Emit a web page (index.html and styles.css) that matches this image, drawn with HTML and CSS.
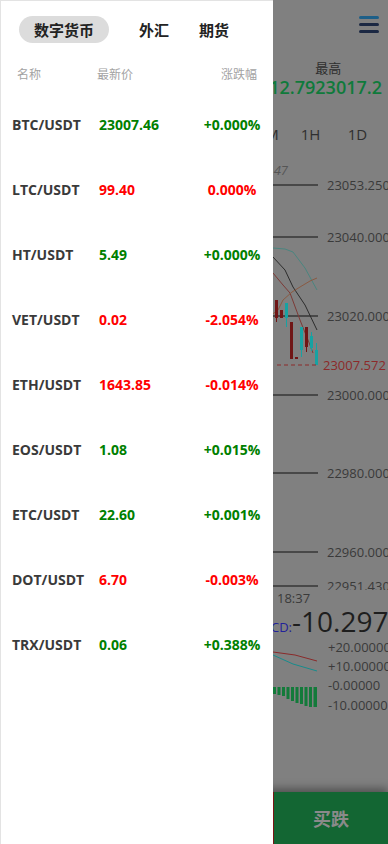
FILE: index.html
```html
<!DOCTYPE html>
<html lang="zh-CN">
<head>
<meta charset="utf-8">
<title>行情</title>
<link rel="stylesheet" href="styles.css">
</head>
<body>
<div class="page">
  <div class="topbar">
    <div class="menu"><span class="bar bar-top"></span><span class="bar"></span><span class="bar"></span></div>
  </div>
  <div class="stats">
    <div class="stat"><div class="stat-label">最低</div><div class="stat-value">23012.79</div></div>
    <div class="stat"><div class="stat-label">最高</div><div class="stat-value">23017.2</div></div>
  </div>
  <div class="periods">
    <span class="period">分时</span><span class="period">1M</span><span class="period">5M</span><span class="period">15M</span><span class="period">30M</span><span class="period">1H</span><span class="period">1D</span>
  </div>
  <div class="legend"><span class="legend-item">MA5:23012.47</span></div>
  <svg class="chart" width="388" height="414" viewBox="0 0 388 414">
    <g class="grid">
      <line x1="0" y1="9" x2="318" y2="9"/>
      <line x1="0" y1="61" x2="318" y2="61"/>
      <line x1="0" y1="140" x2="318" y2="140"/>
      <line x1="0" y1="219" x2="318" y2="219"/>
      <line x1="0" y1="297" x2="318" y2="297"/>
      <line x1="0" y1="376" x2="318" y2="376"/>
      <line x1="0" y1="410" x2="318" y2="410"/>
    </g>
    <g class="axis">
      <text x="327" y="9">23053.2500</text>
      <text x="327" y="61">23040.0000</text>
      <text x="327" y="140">23020.0000</text>
      <text x="327" y="219">23000.0000</text>
      <text x="327" y="297">22980.0000</text>
      <text x="327" y="376">22960.0000</text>
      <text x="327" y="410">22951.4300</text>
    </g>
    <polyline class="ma ma1" points="255,70 273,72 285,73 293,76 305,92 317,114"/>
    <polyline class="ma ma2" points="255,70 273,81 285,94 293,111 305,129 317,154"/>
    <polyline class="ma ma3" points="255,84 273,97 283,109 290,117 300,144 308,164 313,177"/>
    <polyline class="ma ma4" points="270,140 278,134 283,124 292,116 300,111 310,105 317,102"/>
    <g class="up">
      <rect x="270" y="124" width="3" height="12"/>
      <line x1="286.5" y1="127" x2="286.5" y2="151"/><rect x="285" y="127" width="3" height="15"/>
      <line x1="301.5" y1="151" x2="301.5" y2="181"/><rect x="300" y="151" width="3" height="23"/>
      <line x1="311.5" y1="156" x2="311.5" y2="175"/><rect x="310" y="160" width="3" height="12"/>
      <line x1="316.5" y1="167" x2="316.5" y2="189"/><rect x="315" y="174" width="3" height="15"/>
    </g>
    <g class="down">
      <line x1="276.5" y1="124" x2="276.5" y2="146"/><rect x="275" y="124" width="3" height="18"/>
      <rect x="280" y="134" width="3" height="8"/>
      <rect x="290" y="146" width="3" height="37"/>
      <rect x="295" y="181" width="3" height="2"/>
      <line x1="306.5" y1="151" x2="306.5" y2="176"/><rect x="305" y="151" width="3" height="20"/>
    </g>
    <line class="last" x1="277" y1="189" x2="318" y2="189"/>
    <text class="last-label" x="323" y="189">23007.572</text>
  </svg>
  <div class="times"><span class="tick">18:07</span><span class="tick">18:22</span><span class="tick">18:37</span></div>
  <div class="macd-head"><span class="macd-name">MACD:</span><span class="macd-value">-10.29791</span></div>
  <svg class="macd" width="388" height="84" viewBox="0 0 388 84">
    <g class="axis">
      <text x="328" y="11">+20.00000</text>
      <text x="328" y="30">+10.00000</text>
      <text x="328" y="49">-0.00000</text>
      <text x="328" y="69">-10.00000</text>
    </g>
    <polyline class="dea" points="250,10 273,16 295,19 317,25"/>
    <polyline class="dif" points="250,14 273,19 293,28 317,35"/>
    <g class="hist">
      <rect x="273" y="51" width="3" height="7"/>
      <rect x="277.5" y="51" width="3" height="8"/>
      <rect x="282" y="51" width="3" height="9"/>
      <rect x="286.5" y="51" width="3" height="12"/>
      <rect x="291" y="51" width="3" height="14"/>
      <rect x="295.5" y="51" width="3" height="16"/>
      <rect x="300" y="51" width="3" height="17"/>
      <rect x="304.5" y="51" width="3" height="19"/>
      <rect x="309" y="51" width="3" height="20"/>
      <rect x="313.5" y="51" width="3.5" height="20"/>
    </g>
  </svg>
  <div class="spacer"></div>
  <div class="actions">
    <div class="balance">可用余额 0.00</div>
    <button class="btn btn-rise">买涨</button>
    <button class="btn btn-fall">买跌</button>
  </div>
</div>

<aside class="drawer">
  <div class="tabs">
    <span class="tab active">数字货币</span>
    <span class="tab">外汇</span>
    <span class="tab">期货</span>
  </div>
  <div class="list-head">
    <span class="col-name">名称</span>
    <span class="col-price">最新价</span>
    <span class="col-change">涨跌幅</span>
  </div>
  <div class="list">
    <div class="row"><span class="sym">BTC/USDT</span><span class="up-text">23007.46</span><span class="chg up-text">+0.000%</span></div>
    <div class="row"><span class="sym">LTC/USDT</span><span class="down-text">99.40</span><span class="chg down-text">0.000%</span></div>
    <div class="row"><span class="sym">HT/USDT</span><span class="up-text">5.49</span><span class="chg up-text">+0.000%</span></div>
    <div class="row"><span class="sym">VET/USDT</span><span class="down-text">0.02</span><span class="chg down-text">-2.054%</span></div>
    <div class="row"><span class="sym">ETH/USDT</span><span class="down-text">1643.85</span><span class="chg down-text">-0.014%</span></div>
    <div class="row"><span class="sym">EOS/USDT</span><span class="up-text">1.08</span><span class="chg up-text">+0.015%</span></div>
    <div class="row"><span class="sym">ETC/USDT</span><span class="up-text">22.60</span><span class="chg up-text">+0.001%</span></div>
    <div class="row"><span class="sym">DOT/USDT</span><span class="down-text">6.70</span><span class="chg down-text">-0.003%</span></div>
    <div class="row"><span class="sym">TRX/USDT</span><span class="up-text">0.06</span><span class="chg up-text">+0.388%</span></div>
  </div>
</aside>
</body>
</html>
```
FILE: styles.css
```css
* { box-sizing: border-box; }
html, body { margin: 0; padding: 0; }
body {
  width: 388px;
  height: 844px;
  overflow: hidden;
  position: relative;
  background: #808080;
  font-family: "Open Sans", "Noto Sans CJK SC", sans-serif;
}

/* underlying (dimmed) trading page */
.page {
  display: flex;
  flex-direction: column;
  width: 388px;
  height: 844px;
  overflow: hidden;
  color: #333;
}
.topbar {
  display: flex;
  justify-content: flex-end;
  align-items: flex-start;
  height: 50px;
  padding: 16px 9px 0 0;
}
.menu {
  display: flex;
  flex-direction: column;
  gap: 4px;
  width: 20px;
}
.bar {
  display: block;
  height: 3px;
  border-radius: 1.5px;
  background: #1b2843;
}
.bar-top { background: #1d5f88; }

.stats {
  display: flex;
  justify-content: flex-end;
  padding: 10px 6px 0 0;
}
.stat-label {
  font-family: "Noto Sans CJK SC", sans-serif;
  font-size: 13px;
  line-height: 16px;
  color: #2e2e2e;
}
.stat-value {
  font-size: 18px;
  line-height: 22px;
  font-weight: 600;
  color: #0f7a3b;
  white-space: nowrap;
}

.periods {
  display: flex;
  margin-top: 26px;
  padding-left: 52px;
  overflow: hidden;
}
.period {
  flex: 0 0 47px;
  text-align: center;
  font-size: 15px;
  line-height: 20px;
  color: #2f2f2f;
}

.legend {
  margin-top: 14px;
  height: 16px;
}
.legend-item {
  display: inline-block;
  width: 288px;
  text-align: right;
  font-size: 13px;
  line-height: 16px;
  font-style: italic;
  color: #555;
}

.chart { display: block; flex-shrink: 0; margin-top: 2px; }
.grid line { stroke: #111; stroke-width: 1; }
.axis text {
  font-family: "Open Sans", sans-serif;
  font-size: 13px;
  fill: #3a3a3a;
  dominant-baseline: central;
}
.ma { fill: none; stroke-width: 1; }
.ma1 { stroke: #4a857f; }
.ma2 { stroke: #2c2c2c; }
.ma3 { stroke: #7c3a36; }
.ma4 { stroke: #8a5a42; }
.up rect { fill: #17a2a2; }
.up line { stroke: #17a2a2; }
.down rect { fill: #701616; }
.down line { stroke: #701616; }
.last { stroke: #8c2a2a; stroke-dasharray: 4 3; }
.last-label {
  font-family: "Open Sans", sans-serif;
  font-size: 13px;
  fill: #8c2a2a;
  dominant-baseline: central;
}

.times {
  display: flex;
  padding-left: 57px;
  font-size: 13px;
  line-height: 16px;
  color: #3a3a3a;
}
.tick { flex: 0 0 110px; }
.macd-head {
  display: flex;
  align-items: baseline;
  height: 30px;
  overflow: hidden;
  white-space: nowrap;
}
.macd-name {
  flex: 0 0 292px;
  text-align: right;
  font-size: 13px;
  color: #22229a;
}
.macd-value {
  flex: 0 0 auto;
  font-size: 28px;
  line-height: 30px;
  color: #1e1e1e;
}
.macd { display: block; flex-shrink: 0; }
.dea { fill: none; stroke: #8a2a2a; stroke-width: 1; }
.dif { fill: none; stroke: #178c8c; stroke-width: 1; }
.hist rect { fill: #137a3a; }

.spacer { flex: 1; }
.actions {
  display: flex;
  height: 52px;
  background: #7a7a7a;
  box-shadow: 0 -4px 8px rgba(0, 0, 0, 0.35);
}
.balance {
  flex: 1;
  padding-left: 12px;
  font-size: 13px;
  line-height: 52px;
  color: #333;
}
.btn {
  flex: 0 0 114px;
  border: 0;
  margin: 0;
  font-family: "Noto Sans CJK SC", sans-serif;
  font-size: 18px;
  font-weight: 700;
  color: #8a8a8a;
}
.btn-rise { background: #7a1515; }
.btn-fall { background: #136633; }

/* drawer */
.drawer {
  position: absolute;
  left: 0;
  top: 0;
  bottom: 0;
  width: 273px;
  background: #fff;
  border-top: 1px solid #e3e3e3;
  border-left: 1px solid #e3e3e3;
}
.tabs {
  display: flex;
  padding: 15px 0 0 18px;
}
.tab {
  height: 27px;
  line-height: 27px;
  padding: 0 15px;
  border-radius: 14px;
  font-family: "Noto Sans CJK SC", sans-serif;
  font-size: 15px;
  font-weight: 700;
  color: #222;
}
.tab.active {
  margin-right: 15px;
  background: #dcdcdc;
}

.list-head {
  display: flex;
  margin-top: 23px;
  padding: 0 16px;
  font-family: "Noto Sans CJK SC", sans-serif;
  font-size: 12px;
  line-height: 16px;
  color: #a3a3a3;
}
.col-name { width: 80px; }
.col-change { margin-left: auto; }

.list { margin-top: 10px; }
.row {
  display: grid;
  grid-template-columns: 87px 101px 64px;
  align-items: center;
  height: 65px;
  padding-left: 11px;
  font-size: 14px;
  font-weight: 700;
  white-space: nowrap;
}
.sym { color: #3a3a3a; }
.chg { text-align: center; }
.up-text { color: #008000; }
.down-text { color: #ff0000; }
```
